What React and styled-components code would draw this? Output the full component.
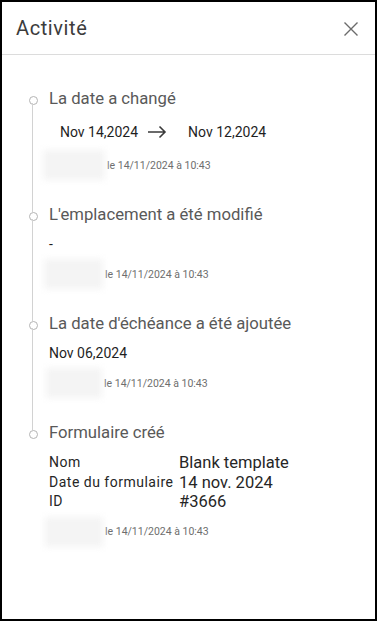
import React from "react";
import styled, { createGlobalStyle } from "styled-components";

const GlobalStyle = createGlobalStyle`
    html, body {
        margin: 0;
        padding: 0;
        background: #000;
    }
    * {
        box-sizing: border-box;
    }
`;

const Panel = styled.div`
    width: 377px;
    height: 621px;
    border: 2px solid #000;
    background: #fff;
    font-family: Roboto, "Noto Sans", sans-serif;
    display: flex;
    flex-direction: column;
    overflow: hidden;
`;

const Header = styled.div`
    height: 53px;
    flex-shrink: 0;
    display: flex;
    align-items: center;
    justify-content: space-between;
    padding: 0 14px 0 14px;
    border-bottom: 1px solid #dcdcdc;
`;

const Title = styled.h1`
    margin: 0;
    font-size: 20px;
    letter-spacing: 0.6px;
    font-weight: 400;
    color: #3c3c3c;
    padding-bottom: 1px;
`;

const CloseButton = styled.button`
    border: none;
    background: none;
    padding: 0;
    width: 20px;
    height: 20px;
    display: flex;
    align-items: center;
    justify-content: center;
    cursor: pointer;
    margin-top: 1px;
`;

const Timeline = styled.div`
    padding: 33px 0 0 27px;
    display: flex;
    flex-direction: column;
`;

const Entry = styled.div`
    position: relative;
    padding-left: 20px;
    padding-bottom: ${(p) => (p.last ? "0" : "23px")};

    &::before {
        content: "";
        position: absolute;
        left: 0;
        top: 7.5px;
        width: 7px;
        height: 7px;
        border: 1.5px solid #b4b4b4;
        border-radius: 50%;
        background: #fff;
    }

    ${(p) =>
        !p.last &&
        `
        &::after {
            content: "";
            position: absolute;
            left: 3px;
            top: 15px;
            bottom: -8px;
            width: 1px;
            background: #d2d2d2;
        }
    `}
`;

const EntryTitle = styled.div`
    font-size: 16.7px;
    color: #595959;
    line-height: 22px;
`;

const DateChange = styled.div`
    display: flex;
    align-items: center;
    font-size: 14px;
    color: #1f1f1f;
    padding: 12px 0 3px 11px;
    line-height: 20px;
`;

const DateValue = styled.span``;

const Arrow = styled.span`
    display: flex;
    align-items: center;
    margin: 0 21px 0 9px;
`;

const Value = styled.div`
    font-size: 14px;
    color: #1f1f1f;
    line-height: 20px;
    padding-top: 8px;
`;

const Meta = styled.div`
    display: flex;
    align-items: center;
    margin-left: ${(p) => p.offset}px;
    margin-top: 4px;
    height: 32px;
`;

const BlurredName = styled.span`
    display: inline-block;
    width: ${(p) => p.w}px;
    height: 30px;
    background: #f4f4f4;
    filter: blur(3px);
`;

const MetaText = styled.span`
    font-size: 10.5px;
    color: #6e6e6e;
    margin-left: 2px;
`;

const Fields = styled.div`
    display: grid;
    grid-template-columns: 130px auto;
    padding-top: 9px;
    align-items: end;
`;

const FieldLabel = styled.div`
    font-size: 14px;
    letter-spacing: 0.5px;
    color: #262626;
    line-height: 19.5px;
`;

const FieldValue = styled.div`
    font-size: 16.5px;
    color: #262626;
    line-height: 19.5px;
`;

function CloseIcon() {
    return (
        <svg width="16" height="16" viewBox="0 0 16 16">
            <path
                d="M1.5 1.5 L14.5 14.5 M14.5 1.5 L1.5 14.5"
                stroke="#6b6b6b"
                strokeWidth="1.4"
                fill="none"
            />
        </svg>
    );
}

function ArrowIcon() {
    return (
        <svg width="20" height="14" viewBox="0 0 20 14">
            <path
                d="M1 7 H18 M12.5 1.5 L18 7 L12.5 12.5"
                stroke="#3a3a3a"
                strokeWidth="1.6"
                fill="none"
            />
        </svg>
    );
}

function EntryMeta({ offset, w }) {
    return (
        <Meta offset={offset}>
            <BlurredName w={w} />
            <MetaText>le 14/11/2024 à 10:43</MetaText>
        </Meta>
    );
}

export default function App() {
    return (
        <>
            <GlobalStyle />
            <Panel>
                <Header>
                    <Title>Activité</Title>
                    <CloseButton aria-label="Fermer">
                        <CloseIcon />
                    </CloseButton>
                </Header>
                <Timeline>
                    <Entry>
                        <EntryTitle>La date a changé</EntryTitle>
                        <DateChange>
                            <DateValue>Nov 14,2024</DateValue>
                            <Arrow>
                                <ArrowIcon />
                            </Arrow>
                            <DateValue>Nov 12,2024</DateValue>
                        </DateChange>
                        <EntryMeta offset={-6} w={62} />
                    </Entry>
                    <Entry>
                        <EntryTitle>L'emplacement a été modifié</EntryTitle>
                        <Value>-</Value>
                        <EntryMeta offset={-5} w={59} />
                    </Entry>
                    <Entry>
                        <EntryTitle>La date d'échéance a été ajoutée</EntryTitle>
                        <Value>Nov 06,2024</Value>
                        <EntryMeta offset={-3} w={56} />
                    </Entry>
                    <Entry last>
                        <EntryTitle>Formulaire créé</EntryTitle>
                        <Fields>
                            <FieldLabel>Nom</FieldLabel>
                            <FieldValue>Blank template</FieldValue>
                            <FieldLabel>Date du formulaire</FieldLabel>
                            <FieldValue>14 nov. 2024</FieldValue>
                            <FieldLabel>ID</FieldLabel>
                            <FieldValue>#3666</FieldValue>
                        </Fields>
                        <EntryMeta offset={-4} w={58} />
                    </Entry>
                </Timeline>
            </Panel>
        </>
    );
}
